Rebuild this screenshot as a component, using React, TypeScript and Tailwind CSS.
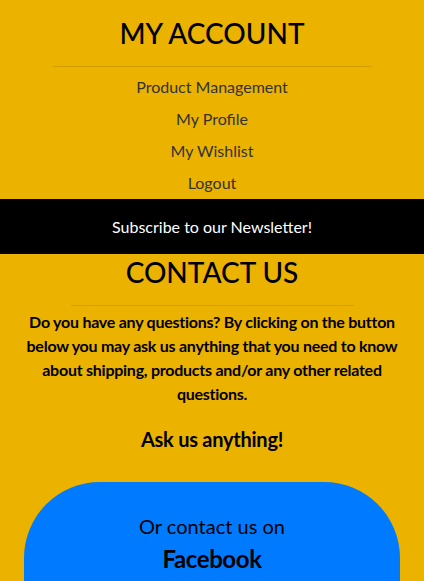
export default function App() {
  const links = ["Product Management", "My Profile", "My Wishlist", "Logout"];
  return (
    <div className="min-h-[581px] bg-[#ebb200] font-['Lato','Liberation_Sans',sans-serif] text-center overflow-hidden h-[581px]">
      <section className="pt-[15px] flex flex-col items-center">
        <h2 className="text-[28px] leading-[36px] font-medium text-black">MY ACCOUNT</h2>
        <hr className="mt-[15px] w-[319px] border-0 border-t border-black/10" />
        <ul className="mt-[4px] flex flex-col items-center">
          {links.map((l) => (
            <li key={l} className="text-[16px] leading-[32px] text-[#333]">
              {l}
            </li>
          ))}
        </ul>
      </section>
      <div className="h-[55px] bg-black flex items-center justify-center text-white text-[16px]">
        Subscribe to our Newsletter!
      </div>
      <section className="flex flex-col items-center">
        <h2 className="text-[28px] leading-[36px] font-medium text-black">CONTACT US</h2>
        <hr className="mt-[15px] w-[283px] border-0 border-t border-black/10" />
        <p className="mt-[4px] px-[22px] text-[16px] leading-[24px] font-bold tracking-[-0.25px] text-black">
          Do you have any questions? By clicking on the button below you may ask us anything that you need to know about shipping, products and/or any other related questions.
        </p>
        <h3 className="mt-[19px] text-[20px] leading-[28px] font-bold tracking-[-0.25px] text-black">Ask us anything!</h3>
        <div className="mt-[29px] mx-[24px] w-[376px] h-[200px] bg-[#007bff] rounded-[76px] pt-[30px] flex flex-col items-center">
          <div className="text-[20px] leading-[28px] text-black">Or contact us on</div>
          <div className="mt-[3px] text-[24px] leading-[32px] font-bold tracking-[-0.4px] text-black">Facebook</div>
        </div>
      </section>
    </div>
  );
}
